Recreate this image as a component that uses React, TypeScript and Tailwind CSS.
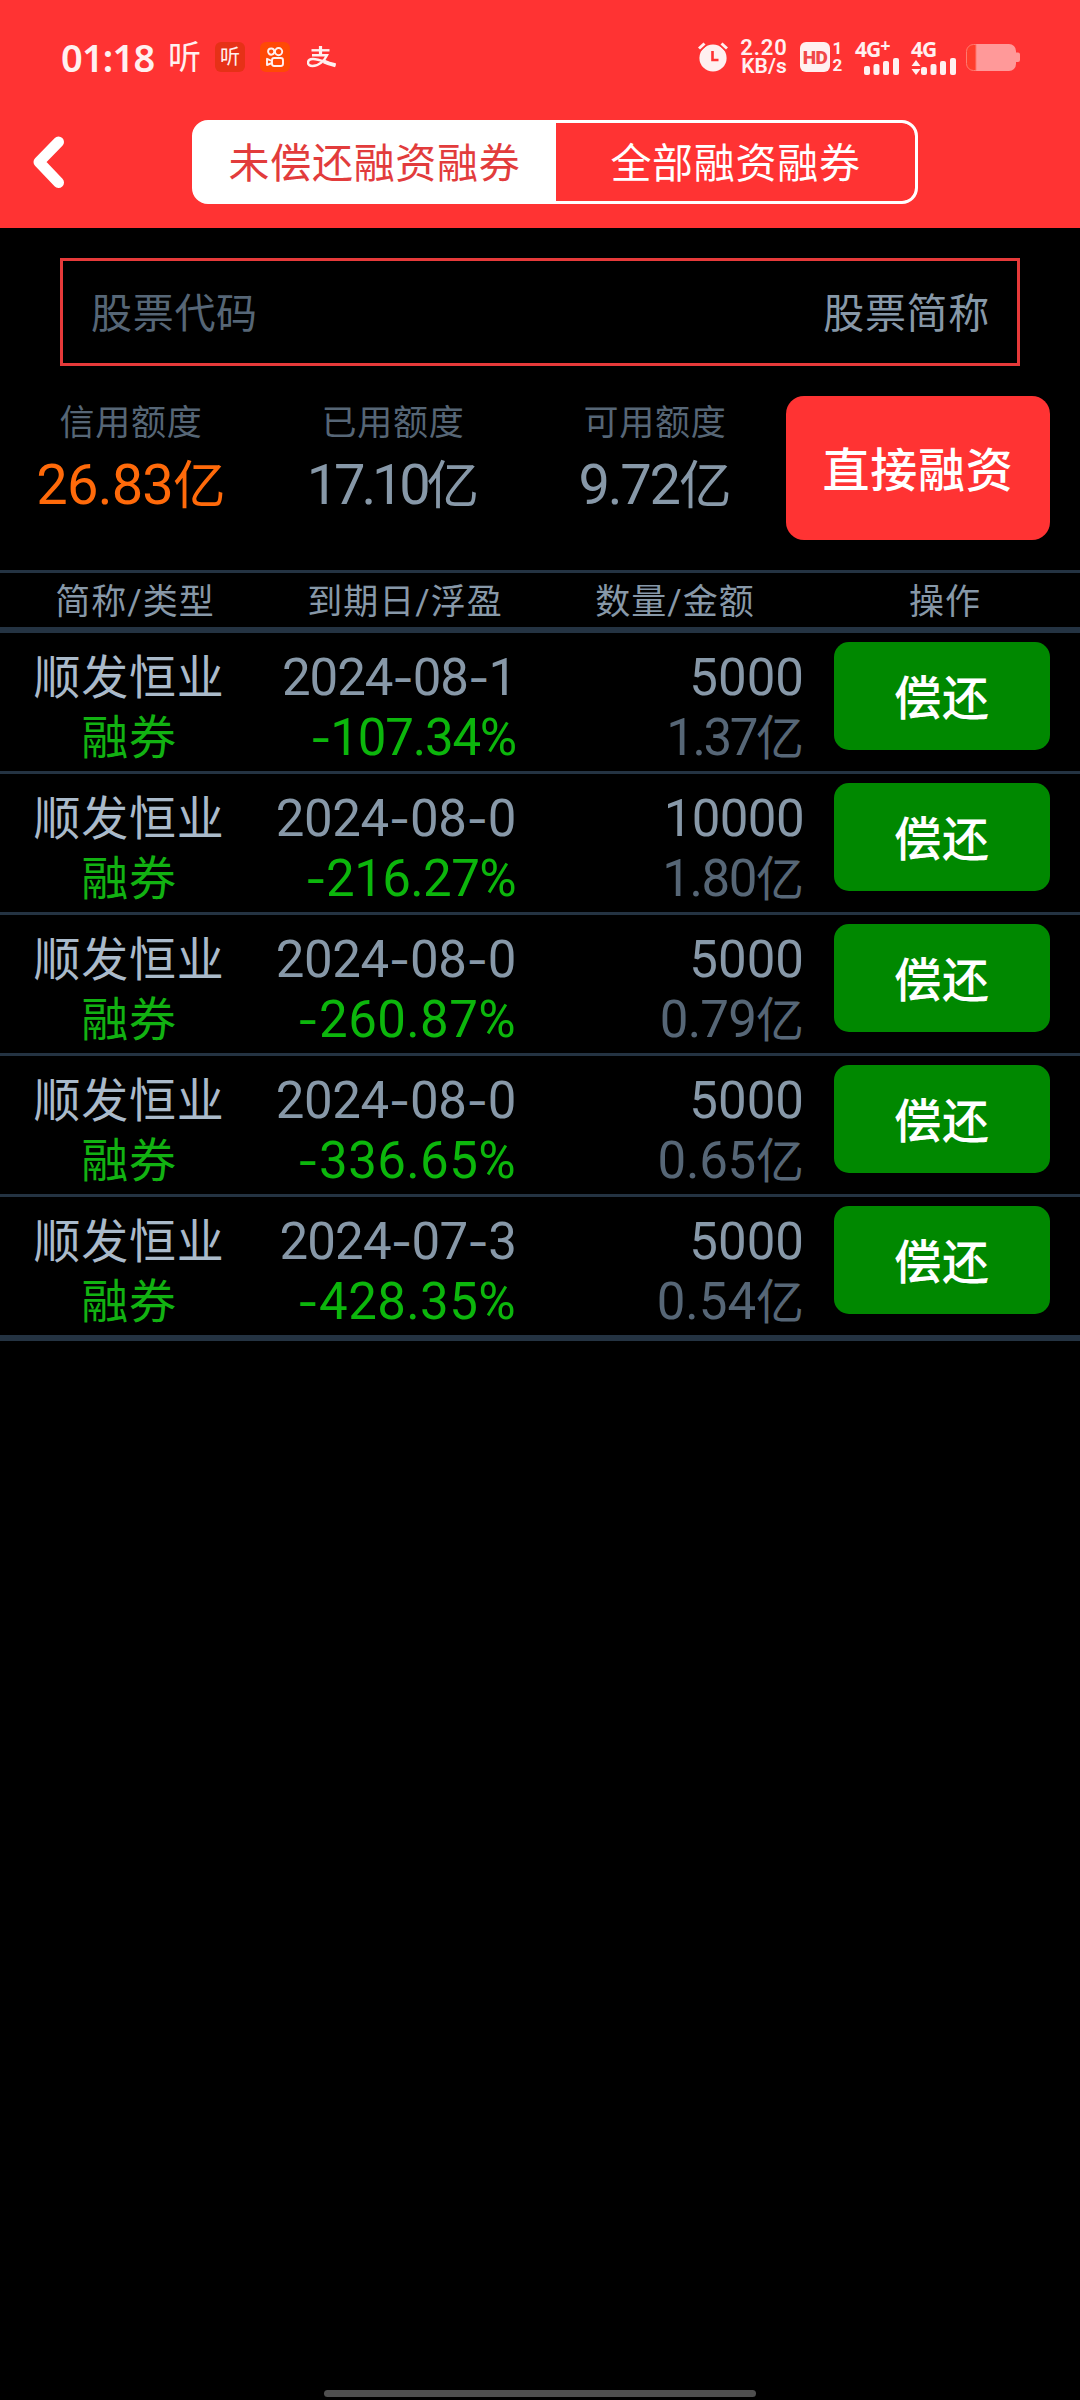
import { Fragment } from "react";

type Loan = {
  name: string;
  kind: string;
  due: string;
  profit: string;
  amount: string;
  value: string;
  track: [number, number, number, number];
};

const loans: Loan[] = [
  { name: "顺发恒业", kind: "融券", due: "2024-08-1", profit: "-107.34%", amount: "5000", value: "1.37亿", track: [-1.1, -1.2, 0, -2.4] },
  { name: "顺发恒业", kind: "融券", due: "2024-08-0", profit: "-216.27%", amount: "10000", value: "1.80亿", track: [-0.4, -0.6, -0.6, -1.4] },
  { name: "顺发恒业", kind: "融券", due: "2024-08-0", profit: "-260.87%", amount: "5000", value: "0.79亿", track: [-0.4, 0.4, 0, -0.8] },
  { name: "顺发恒业", kind: "融券", due: "2024-08-0", profit: "-336.65%", amount: "5000", value: "0.65亿", track: [-0.4, 0.4, 0, -0.2] },
  { name: "顺发恒业", kind: "融券", due: "2024-07-3", profit: "-428.35%", amount: "5000", value: "0.54亿", track: [-0.8, 0.4, 0, 0] },
];

const quotas = [
  { label: "信用额度", value: "26.83亿", color: "text-[#ff6a0a]", track: -0.8 },
  { label: "已用额度", value: "17.10亿", color: "text-[#8798a8]", track: -4.2 },
  { label: "可用额度", value: "9.72亿", color: "text-[#8798a8]", track: -2.2 },
];

/** Digits with a wider hyphen and a slightly smaller 亿 unit. */
function Num({ text, track = 0 }: { text: string; track?: number }) {
  const parts = text.split(/(-|亿)/).filter(Boolean);
  return (
    <span className="whitespace-nowrap" style={{ letterSpacing: `${track}px` }}>
      {parts.map((p, i) => (
        <Fragment key={i}>
          {p === "-" ? (
            <span className="font-['Inter'] text-[0.92em] leading-none">-</span>
          ) : p === "亿" ? (
            <span className="text-[0.94em] leading-none tracking-normal">亿</span>
          ) : (
            p
          )}
        </Fragment>
      ))}
    </span>
  );
}

function Bars({ short }: { short?: boolean }) {
  return (
    <svg className="block h-[17px] w-[36px]" viewBox="0 0 36 17" fill="#fff0f0">
      <rect x="0" y={short ? 9 : 8} width="6" height={short ? 8 : 9} rx="2" />
      <rect x="9.5" y="6" width="6" height="11" rx="2" />
      <rect x="19" y="3" width="6" height="14" rx="2" />
      <rect x="29" y="0" width="6" height="17" rx="2" />
    </svg>
  );
}

function StatusBar() {
  return (
    <div className="flex h-[114px] items-center pl-[61px] pr-[60px] text-[#fff0f0]">
      <span className="w-[95px] whitespace-nowrap font-['Noto_Sans'] text-[38px] font-semibold leading-none tracking-[-0.8px]">01:18</span>
      <span className="ml-[12px] w-[33px] text-[33px] leading-none">听</span>
      <span className="ml-[14px] flex size-[30px] items-center justify-center rounded-[6px] bg-[#e63117] text-[20px] leading-none">听</span>
      <span className="ml-[15px] flex size-[30px] items-center justify-center rounded-[6px] bg-[#ff4906]">
        <svg className="size-[20px]" viewBox="0 0 20 20" fill="none" stroke="#fff0f0" strokeWidth="1.9">
          <circle cx="6.2" cy="4.6" r="3.1" />
          <circle cx="13.6" cy="4.6" r="3.6" />
          <rect x="7" y="11" width="11" height="8" rx="2.2" />
          <path d="M7 14 L2 11.8 V18 L7 16" strokeLinejoin="round" />
        </svg>
      </span>
      <svg className="ml-[17px] h-[22px] w-[29px]" viewBox="0 0 29 22" fill="none" stroke="#fff0f0">
        <path d="M4.500 4.300H22.500" strokeWidth="2.4" />
        <path d="M13.500 0V9" strokeWidth="3.2" />
        <path d="M5 9.300H20C17.500 14.500 12 20 5.500 20C-0.500 20-0.500 13.500 5.500 13C11.500 12.500 18 16.500 28.500 19.300" strokeWidth="2.4" />
        <path d="M17 15.500C20 17 24 18.300 28.500 19.300" strokeWidth="4" />
      </svg>

      <div className="ml-auto flex items-center">
        <svg className="h-[30px] w-[30px]" viewBox="0 0 30 30">
          <circle cx="15" cy="16" r="13.6" fill="#fff0f0" />
          <path d="M0.500 6.500L6.500 1M29.500 6.500L23.500 1" stroke="#ff3333" strokeWidth="7" />
          <path d="M1 6.500L6.500 1.500M29 6.500L23.500 1.500" stroke="#fff0f0" strokeWidth="3" />
          <path d="M14.500 9V18H20.500" stroke="#ff3333" strokeWidth="2.6" fill="none" />
        </svg>
        <div className="ml-[12px] flex w-[48px] flex-col items-center font-['Roboto'] text-[22px] font-semibold leading-[19px]">
          <span className="whitespace-nowrap tracking-[0.9px]">2.20</span>
          <span className="whitespace-nowrap text-[21px]">KB/s</span>
        </div>
        <div className="ml-[12px] flex h-[30px] w-[30px] items-center justify-center rounded-[6px] bg-[#fff0f0]">
          <span className="text-[19px] font-black leading-none tracking-[-0.5px] text-[#f04848]">HD</span>
        </div>
        <div className="ml-[2px] flex h-[32px] w-[11px] flex-col items-center justify-between font-['Roboto'] text-[17px] font-bold leading-[15px]">
          <span>1</span>
          <span>2</span>
        </div>
        <div className="ml-[12px] flex h-[32px] w-[46px] flex-col justify-between">
          <span className="flex whitespace-nowrap font-['Noto_Sans'] text-[21px] font-bold leading-[17px] tracking-[-1px]">
            4G<span className="-mt-[4px] text-[18px] leading-[17px]">+</span>
          </span>
          <span className="ml-[9px]"><Bars /></span>
        </div>
        <div className="ml-[10px] flex h-[32px] w-[46px] flex-col justify-between">
          <span className="whitespace-nowrap font-['Noto_Sans'] text-[21px] font-bold leading-[17px] tracking-[-1px]">4G</span>
          <span className="flex items-end">
            <svg className="h-[15px] w-[10px]" viewBox="0 0 10 15" fill="#fff0f0">
              <path d="M5 0L9.500 6H0.500zM5 15L9.500 9H0.500z" />
            </svg>
            <Bars short />
          </span>
        </div>
        <svg className="ml-[9px] h-[27px] w-[54px]" viewBox="0 0 54 27">
          <path d="M10 0H43a7 7 0 0 1 7 7V8.500H52a2 2 0 0 1 2 2V16a2 2 0 0 1-2 2H50V20a7 7 0 0 1-7 7H10z" fill="#ff9999" />
          <path d="M10 .5H7.500a7 7 0 0 0-7 7V19.500a7 7 0 0 0 7 7H10z" fill="#ff3d2b" stroke="#ff7a70" strokeWidth="1" />
        </svg>
      </div>
    </div>
  );
}

export default function App() {
  return (
    <div className="flex h-[2400px] w-[1080px] flex-col overflow-hidden bg-black font-['Roboto','Noto_Sans_CJK_SC',sans-serif]">
      <header className="h-[228px] shrink-0 bg-[#ff3333]">
        <StatusBar />
        <div className="flex pt-[6px]">
          <button className="flex h-[84px] w-[192px] items-center pl-[31px]">
            <svg className="h-[54px] w-[34px]" viewBox="0 0 34 54" fill="none" stroke="#fff" strokeWidth="11" strokeLinejoin="round" strokeLinecap="round">
              <path d="M27.500 7L8 27L27.500 47.500" />
            </svg>
          </button>
          <div className="flex h-[84px] w-[726px] overflow-hidden rounded-[16px] border-[3px] border-white bg-white text-[41px] leading-none tracking-[0.7px]">
            <button className="w-[361px] bg-white pr-[2px] pt-[4px] text-[#e23c3c]">未偿还融资融券</button>
            <button className="flex-1 rounded-r-[13px] bg-[#ff3333] pt-[4px] text-white">全部融资融券</button>
          </div>
        </div>
      </header>

      <div className="mx-[60px] mt-[30px] flex h-[108px] shrink-0 items-center justify-between border-[3px] border-[#e63a3a] pl-[28px] pr-[27px] pt-[4px] text-[41px] leading-none tracking-[0.7px]">
        <span className="text-[#566676]">股票代码</span>
        <span className="text-[#8798a8]">股票简称</span>
      </div>

      <section className="mt-[30px] flex h-[174px] shrink-0">
        {quotas.map((q) => (
          <div key={q.label} className="flex w-[262px] flex-col items-center">
            <span className="mt-[6px] text-[35px] leading-[44px] tracking-[0.8px] text-[#566676]">{q.label}</span>
            <span className={`text-[56px] leading-[78px] ${q.color}`}>
              <Num text={q.value} track={q.track} />
            </span>
          </div>
        ))}
        <button className="h-[144px] w-[264px] rounded-[18px] bg-[#ff3333] pt-[4px] text-[47px] font-medium leading-none tracking-[0.8px] text-white">直接融资</button>
      </section>

      <div className="grid h-[63px] shrink-0 grid-cols-4 items-center border-b-[6px] border-t-[3px] border-[#243342] pt-[5px] text-center text-[35px] leading-none tracking-[1px] text-[#8798a8]">
        <span>简称/类型</span>
        <span>到期日/浮盈</span>
        <span>数量/金额</span>
        <span>操作</span>
      </div>

      <div className="shrink-0 border-b-[3px] border-[#243342]">
        {loans.map((l, i) => (
          <div key={i} className="grid h-[141px] grid-cols-[258px_258px_288px_1fr] border-b-[3px] border-[#243342] text-[51px] leading-[60px]">
            <div className="flex flex-col items-center pt-[15px] text-[47px] tracking-[0.8px]">
              <span className="text-[#aabaca]">{l.name}</span>
              <span className="text-[#12b212]">{l.kind}</span>
            </div>
            <div className="flex flex-col items-end pt-[15px]">
              <span className="text-[#8798a8]"><Num text={l.due} track={l.track[0]} /></span>
              <span className="text-[#0cb60c]"><Num text={l.profit} track={l.track[1]} /></span>
            </div>
            <div className="flex flex-col items-end pt-[15px]">
              <span className="text-[#8798a8]"><Num text={l.amount} track={l.track[2]} /></span>
              <span className="text-[#566676]"><Num text={l.value} track={l.track[3]} /></span>
            </div>
            <button className="ml-[30px] mt-[9px] h-[108px] w-[216px] rounded-[15px] bg-[#008800] pt-[5px] text-[47px] font-medium leading-none tracking-[0.8px] text-white">偿还</button>
          </div>
        ))}
      </div>

      <div className="mx-auto mb-[3px] mt-auto h-[7px] w-[432px] shrink-0 rounded-full bg-[#4f4f4f]" />
    </div>
  );
}
